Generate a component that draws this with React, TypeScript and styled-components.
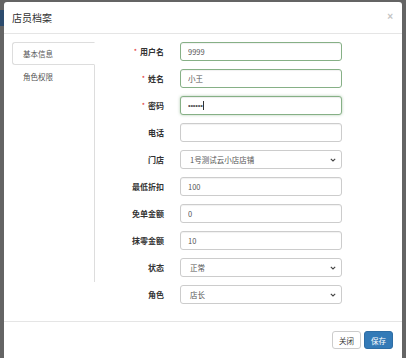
import React from "react";
import styled, { createGlobalStyle } from "styled-components";

const GlobalStyle = createGlobalStyle`
  html, body {
    margin: 0;
    padding: 0;
  }
  body {
    font-family: "Noto Sans CJK SC", "Noto Sans", "Liberation Sans", sans-serif;
    color: #333;
  }
  * {
    box-sizing: border-box;
  }
`;

// dimmed page behind the dialog
const Backdrop = styled.div`
  width: 406px;
  height: 358px;
  overflow: hidden;
  padding: 2px 4px 0 4px;
  background: linear-gradient(#2d4c6e, #2d4c6e) 0 10px / 4px 16px no-repeat,
    #646464;
`;

const Modal = styled.div`
  background: #fff;
  border-radius: 3px 3px 0 0;
  height: 380px;
  display: flex;
  flex-direction: column;
`;

const Header = styled.div`
  height: 32px;
  flex: none;
  display: flex;
  align-items: center;
  justify-content: space-between;
  padding: 0 9px 1px 8px;
  border-bottom: 1px solid #e5e5e5;
`;

const Title = styled.h4`
  margin: 0;
  font-size: 10px;
  font-weight: 400;
  color: #333;
`;

const Close = styled.button`
  border: 0;
  background: none;
  padding: 0;
  font-size: 10px;
  font-weight: 700;
  line-height: 1;
  color: #c4c4c4;
  font-family: "Liberation Sans", sans-serif;
`;

const Body = styled.div`
  display: flex;
  align-items: flex-start;
  padding: 8px 0 0 8px;
  height: 287px;
  flex: none;
`;

const TabList = styled.div`
  width: 83px;
  height: 240px;
  flex: none;
  border-right: 1px solid #ddd;
  display: flex;
  flex-direction: column;
`;

const Tab = styled.div<{ $active?: boolean }>`
  height: 23px;
  display: flex;
  align-items: center;
  padding-left: 10px;
  margin-right: ${(p) => (p.$active ? "-1px" : "0")};
  font-size: 7.5px;
  color: #555;
  background: #fff;
  border: 1px solid ${(p) => (p.$active ? "#ddd" : "transparent")};
  border-right-color: transparent;
  border-radius: 3px 0 0 3px;
`;

const Form = styled.div`
  flex: 1;
  display: flex;
  flex-direction: column;
  gap: 8px;
`;

const Row = styled.div`
  display: grid;
  grid-template-columns: 69px 162px;
  column-gap: 16px;
  align-items: center;
  height: 19px;
`;

const Label = styled.label`
  text-align: right;
  font-size: 8px;
  font-weight: 700;
  line-height: 1;
  color: #333;
`;

const Star = styled.span`
  color: #e02020;
  font-weight: 400;
  font-size: 7px;
  position: relative;
  top: -1px;
  margin-right: 3px;
`;

const Field = styled.div`
  position: relative;
  height: 19px;
`;

const Input = styled.input<{ $ok?: boolean; $focus?: boolean; $secret?: boolean }>`
  display: block;
  width: 100%;
  height: 19px;
  margin: 0;
  padding: 0 7px;
  font-family: ${(p) => (p.$secret ? '"Liberation Sans", sans-serif' : "inherit")};
  font-size: 7.5px;
  letter-spacing: ${(p) => (p.$secret ? "-0.2px" : "0")};
  color: #555;
  background: #fff;
  border: 1px solid ${(p) => (p.$ok ? "#86b086" : "#ccc")};
  border-radius: 3px;
  box-shadow: ${(p) =>
    p.$focus
      ? "inset 0 1px 1px rgba(0,0,0,.075), 0 0 3px rgba(80,140,80,.45)"
      : "inset 0 1px 1px rgba(0,0,0,.06)"};
  outline: none;
`;

const Caret = styled.span`
  position: absolute;
  left: 23px;
  top: 5px;
  width: 1px;
  height: 9px;
  background: #333;
`;

const Select = styled.div`
  height: 19px;
  display: flex;
  align-items: center;
  justify-content: space-between;
  padding: 0 5px 0 9px;
  font-size: 7.5px;
  color: #555;
  border: 1px solid #ccc;
  border-radius: 3px;
  background: #fff;
`;

const Footer = styled.div`
  border-top: 1px solid #e5e5e5;
  display: flex;
  justify-content: flex-end;
  gap: 3px;
  padding: 9px 9px 0 0;
`;

const Button = styled.button<{ $primary?: boolean }>`
  width: 29px;
  height: 18px;
  padding: 0;
  font-family: inherit;
  font-size: 7.5px;
  border-radius: 3px;
  border: 1px solid ${(p) => (p.$primary ? "#2e6da4" : "#ccc")};
  background: ${(p) => (p.$primary ? "#337ab7" : "#fff")};
  color: ${(p) => (p.$primary ? "#fff" : "#333")};
`;

const Chevron = () => (
  <svg width="6" height="4" viewBox="0 0 6 4">
    <path d="M0.8 0.8 L3 3 L5.2 0.8" fill="none" stroke="#444" strokeWidth="1.1" />
  </svg>
);

type FieldDef = {
  label: string;
  value: string;
  required?: boolean;
  select?: boolean;
};

const fields: FieldDef[] = [
  { label: "用户名", value: "9999", required: true },
  { label: "姓名", value: "小王", required: true },
  { label: "密码", value: "123456", required: true },
  { label: "电话", value: "" },
  { label: "门店", value: "1号测试云小店店铺", select: true },
  { label: "最低折扣", value: "100" },
  { label: "免单金额", value: "0" },
  { label: "抹零金额", value: "10" },
  { label: "状态", value: "正常", select: true },
  { label: "角色", value: "店长", select: true },
];

export default function App() {
  return (
    <>
      <GlobalStyle />
      <Backdrop>
        <Modal>
          <Header>
            <Title>店员档案</Title>
            <Close>×</Close>
          </Header>
          <Body>
            <TabList>
              <Tab $active>基本信息</Tab>
              <Tab>角色权限</Tab>
            </TabList>
            <Form>
              {fields.map((f) => {
                const secret = f.label === "密码";
                return (
                  <Row key={f.label}>
                    <Label>
                      {f.required && <Star>*</Star>}
                      {f.label}
                    </Label>
                    {f.select ? (
                      <Select>
                        <span>{f.value}</span>
                        <Chevron />
                      </Select>
                    ) : (
                      <Field>
                        <Input
                          readOnly
                          type={secret ? "password" : "text"}
                          value={f.value}
                          $ok={f.required}
                          $focus={secret}
                          $secret={secret}
                        />
                        {secret && <Caret />}
                      </Field>
                    )}
                  </Row>
                );
              })}
            </Form>
          </Body>
          <Footer>
            <Button>关闭</Button>
            <Button $primary>保存</Button>
          </Footer>
        </Modal>
      </Backdrop>
    </>
  );
}
